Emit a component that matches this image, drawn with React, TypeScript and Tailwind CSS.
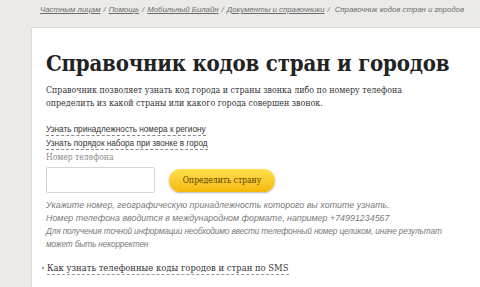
import React from 'react';

const crumbs = ['Частным лицам', 'Помощь', 'Мобильный Билайн', 'Документы и справочники'];

export default function App() {
  return (
    <div className="w-[480px] h-[287px] overflow-hidden bg-[#ebeae7] font-['Liberation_Sans',sans-serif]">
      <div className="h-[27px] pl-[40px] pt-[4px] text-[7.8px] italic text-[#6b6b6b] flex items-start gap-[3px] whitespace-nowrap">
        {crumbs.map((c) => (
          <span key={c} className="flex gap-[3px]">
            <span className="underline">{c}</span>
            <span>/</span>
          </span>
        ))}
        <span className="ml-[2px]">Справочник кодов стран и городов</span>
      </div>

      <div className="ml-[31px] h-[260px] bg-white border-l border-t border-[#dedcd8] pl-[14px] pt-[20px]">
        <h1 className="font-['DejaVu_Serif_Condensed','DejaVu_Serif',serif] font-bold text-[22px] leading-[30px] text-[#222] tracking-[-0.2px] whitespace-nowrap">
          Справочник кодов стран и городов
        </h1>
        <p className="mt-[6px] font-['DejaVu_Serif_Condensed','DejaVu_Serif',serif] text-[8.8px] leading-[13px] text-[#333] whitespace-nowrap">
          Справочник позволяет узнать код города и страны звонка либо по номеру телефона
          <br />
          определить из какой страны или какого города совершен звонок.
        </p>

        <div className="mt-[14px] flex flex-col items-start text-[8.2px] leading-[13px] text-[#333]">
          <span className="border-b border-dashed border-[#888] leading-[11px]">Узнать принадлежность номера к региону</span>
          <span className="mt-[2px] border-b border-dashed border-[#888] leading-[11px]">Узнать порядок набора при звонке в город</span>
        </div>
        <div className="mt-[1px] font-['DejaVu_Serif_Condensed','DejaVu_Serif',serif] text-[8.5px] leading-[13px] text-[#8a8a8a]">
          Номер телефона
        </div>

        <div className="mt-[3px] flex items-center gap-[14px]">
          <div className="w-[109px] h-[26px] border border-[#d6d6d6] rounded-[2px] bg-white" />
          <button className="w-[106px] h-[23px] rounded-full bg-gradient-to-b from-[#ffe04a] to-[#f5b800] shadow-[0_1px_2px_rgba(0,0,0,0.3)] font-['DejaVu_Serif_Condensed','DejaVu_Serif',serif] text-[8.5px] text-[#5a3d00]">
            Определить страну
          </button>
        </div>

        <div className="mt-[6px] italic text-[8.9px] leading-[13px] text-[#7a7a7a] whitespace-nowrap">
          <p>Укажите номер, географическую принадлежность которого вы хотите узнать.</p>
          <p>Номер телефона вводится в международном формате, например +74991234567</p>
          <p className="text-[8.3px] tracking-[-0.15px]">
            Для получения точной информации необходимо ввести телефонный номер целиком, иначе результат
            <br />
            может быть некорректен
          </p>
        </div>

        <div className="mt-[10px] -ml-[4px] flex items-center gap-[3px]">
          <span className="w-[2px] h-[2px] bg-[#999]" />
          <span className="font-['DejaVu_Serif_Condensed','DejaVu_Serif',serif] text-[9.4px] leading-[13px] text-[#333] border-b border-dashed border-[#999]">
            Как узнать телефонные коды городов и стран по SMS
          </span>
        </div>
      </div>
    </div>
  );
}
